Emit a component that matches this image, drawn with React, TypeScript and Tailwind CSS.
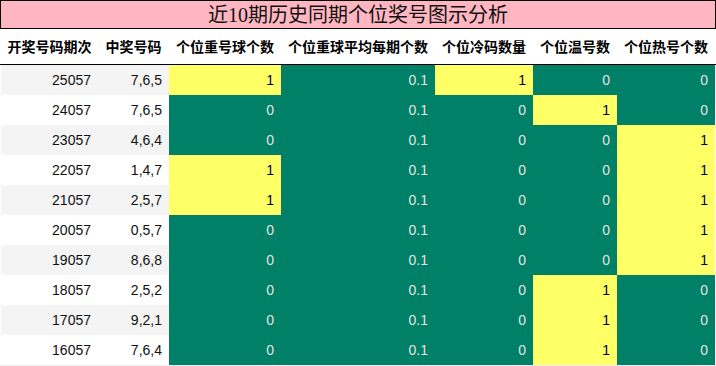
import React from 'react';

type Row = {
  issue: string;
  nums: string;
  repeat: number;
  avg: string;
  cold: number;
  warm: number;
  hot: number;
};

const ROWS: Row[] = [
  { issue: '25057', nums: '7,6,5', repeat: 1, avg: '0.1', cold: 1, warm: 0, hot: 0 },
  { issue: '24057', nums: '7,6,5', repeat: 0, avg: '0.1', cold: 0, warm: 1, hot: 0 },
  { issue: '23057', nums: '4,6,4', repeat: 0, avg: '0.1', cold: 0, warm: 0, hot: 1 },
  { issue: '22057', nums: '1,4,7', repeat: 1, avg: '0.1', cold: 0, warm: 0, hot: 1 },
  { issue: '21057', nums: '2,5,7', repeat: 1, avg: '0.1', cold: 0, warm: 0, hot: 1 },
  { issue: '20057', nums: '0,5,7', repeat: 0, avg: '0.1', cold: 0, warm: 0, hot: 1 },
  { issue: '19057', nums: '8,6,8', repeat: 0, avg: '0.1', cold: 0, warm: 0, hot: 1 },
  { issue: '18057', nums: '2,5,2', repeat: 0, avg: '0.1', cold: 0, warm: 1, hot: 0 },
  { issue: '17057', nums: '9,2,1', repeat: 0, avg: '0.1', cold: 0, warm: 1, hot: 0 },
  { issue: '16057', nums: '7,6,4', repeat: 0, avg: '0.1', cold: 0, warm: 1, hot: 0 },
];

const HEADERS = ['开奖号码期次', '中奖号码', '个位重号球个数', '个位重球平均每期个数', '个位冷码数量', '个位温号数', '个位热号个数'];

const GRID = 'grid grid-cols-[97px_71px_112px_154px_98px_84px_98px]';

function Flag({ value }: { value: number }) {
  // 1 = highlighted yellow, 0 = green
  return value === 1 ? (
    <div className="bg-[#ffff66] text-black text-right pr-[7px] leading-[30px]">{value}</div>
  ) : (
    <div className="bg-[#008066] text-[#e4e4e4] text-right pr-[7px] leading-[30px]">{value}</div>
  );
}

export default function App() {
  return (
    <div className="w-[716px] h-[366px] bg-white overflow-hidden" style={{ fontFamily: '"Liberation Sans", "Noto Sans CJK SC", sans-serif' }}>
      <div
        className="h-[29px] border border-black bg-[#ffb6c1] flex items-center justify-center text-[20px] text-[#111]"
        style={{ fontFamily: '"Liberation Serif", "Noto Sans CJK SC", serif' }}
      >
        近10期历史同期个位奖号图示分析
      </div>

      <div className={`${GRID} pl-px h-[36px] border-b border-black items-center`}>
        {HEADERS.map((h) => (
          <div key={h} className="text-center text-[14px] font-bold text-black whitespace-nowrap" style={{ fontFamily: '"Noto Sans CJK SC", sans-serif' }}>
            {h}
          </div>
        ))}
      </div>

      <div className="pl-px border-b border-[#eeeeee]">
        {ROWS.map((r, i) => (
          <div key={r.issue} className={`${GRID} h-[30px] text-[14px]`}>
            <div className={`${i % 2 === 0 ? 'bg-[#f4f4f4]' : 'bg-white'} text-right pr-[7px] leading-[30px] text-[#111]`}>{r.issue}</div>
            <div className={`${i % 2 === 0 ? 'bg-[#f4f4f4]' : 'bg-white'} text-right pr-[7px] leading-[30px] text-[#111]`}>{r.nums}</div>
            <Flag value={r.repeat} />
            <div className="bg-[#008066] text-[#e4e4e4] text-right pr-[7px] leading-[30px]">{r.avg}</div>
            <Flag value={r.cold} />
            <Flag value={r.warm} />
            <Flag value={r.hot} />
          </div>
        ))}
      </div>
    </div>
  );
}
